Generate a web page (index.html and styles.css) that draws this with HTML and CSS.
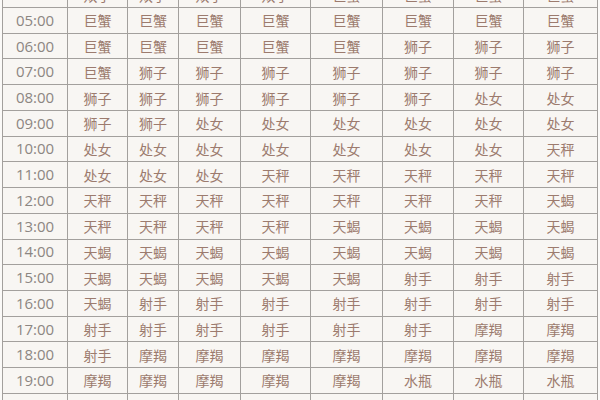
FILE: index.html
```html
<!DOCTYPE html>
<html lang="zh">
<head>
<meta charset="utf-8">
<link rel="stylesheet" href="styles.css">
</head>
<body>
<div class="table" id="t"></div>
<script>
var rows = [
 ["04:00","双子","双子","双子","双子","巨蟹","巨蟹","巨蟹","巨蟹"],
 ["05:00","巨蟹","巨蟹","巨蟹","巨蟹","巨蟹","巨蟹","巨蟹","巨蟹"],
 ["06:00","巨蟹","巨蟹","巨蟹","巨蟹","巨蟹","狮子","狮子","狮子"],
 ["07:00","巨蟹","狮子","狮子","狮子","狮子","狮子","狮子","狮子"],
 ["08:00","狮子","狮子","狮子","狮子","狮子","狮子","处女","处女"],
 ["09:00","狮子","狮子","处女","处女","处女","处女","处女","处女"],
 ["10:00","处女","处女","处女","处女","处女","处女","处女","天秤"],
 ["11:00","处女","处女","处女","天秤","天秤","天秤","天秤","天秤"],
 ["12:00","天秤","天秤","天秤","天秤","天秤","天秤","天秤","天蝎"],
 ["13:00","天秤","天秤","天秤","天秤","天蝎","天蝎","天蝎","天蝎"],
 ["14:00","天蝎","天蝎","天蝎","天蝎","天蝎","天蝎","天蝎","天蝎"],
 ["15:00","天蝎","天蝎","天蝎","天蝎","天蝎","射手","射手","射手"],
 ["16:00","天蝎","射手","射手","射手","射手","射手","射手","射手"],
 ["17:00","射手","射手","射手","射手","射手","射手","摩羯","摩羯"],
 ["18:00","射手","摩羯","摩羯","摩羯","摩羯","摩羯","摩羯","摩羯"],
 ["19:00","摩羯","摩羯","摩羯","摩羯","摩羯","水瓶","水瓶","水瓶"],
 ["20:00","摩羯","水瓶","水瓶","水瓶","水瓶","水瓶","水瓶","水瓶"]
];
var t = document.getElementById('t');
rows.forEach(function(r){
  r.forEach(function(v,i){
    var d = document.createElement('div');
    d.className = i === 0 ? 'cell time' : 'cell sign';
    d.textContent = v;
    t.appendChild(d);
  });
});
</script>
</body>
</html>
```
FILE: styles.css
```css
html, body {
  margin: 0;
  padding: 0;
  background: #fbfaf8;
}
body {
  padding-left: 2px;
  overflow: hidden;
  height: 400px;
}
.table {
  display: grid;
  grid-template-columns: 64px 59px 50px 61px 69px 71px 70px 69px 73px;
  grid-auto-rows: 24.73px;
  gap: 1px;
  padding: 1px;
  width: max-content;
  background: #a3a09d;
  margin-top: -18.7px;
}
.cell {
  background: #f8f6f3;
  display: flex;
  align-items: center;
  justify-content: center;
  font-family: "Noto Sans CJK SC", "Noto Sans", sans-serif;
  font-size: 14px;
  line-height: 1;
}
.time {
  font-family: "Open Sans", "Noto Sans", sans-serif;
  font-size: 15px;
  color: #8c8682;
}
.sign {
  color: #9c7b6e;
}
```
